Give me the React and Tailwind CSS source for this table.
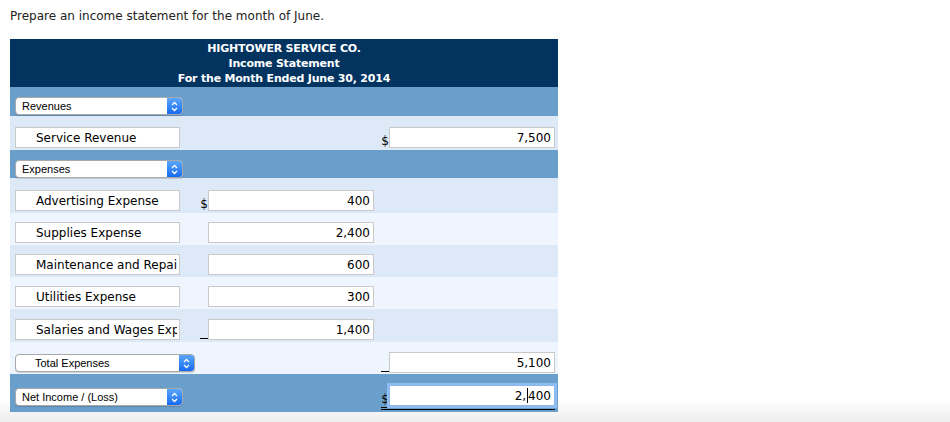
import React from 'react';

const verdana = { fontFamily: '"DejaVu Sans", Verdana, sans-serif' };

// mac style select box
function Select({ label, width = 'w-[168px]', indent = 'pl-[6px]' }) {
  return (
    <div className={`${width} h-[18px] flex rounded-[4px] border border-[#a9a9a9] bg-white shadow-[0_1px_1px_rgba(0,0,0,0.15)] overflow-hidden`}>
      <div className={`flex-1 ${indent} text-[11px] leading-[16px] text-black font-['Liberation_Sans',Arial,sans-serif] truncate`}>
        {label}
      </div>
      <div className="w-[15px] h-full bg-gradient-to-b from-[#5aa6fb] to-[#1569ef] flex items-center justify-center">
        <svg width="7" height="11" viewBox="0 0 7 11" fill="none" stroke="white" strokeWidth="1.3">
          <path d="M1 4 L3.5 1.5 L6 4" />
          <path d="M1 7 L3.5 9.5 L6 7" />
        </svg>
      </div>
    </div>
  );
}

function LabelBox({ text }) {
  return (
    <input
      readOnly
      value={text}
      style={verdana}
      className="w-[165px] h-[21px] border border-[#c9c9c9] bg-white pl-[20px] pr-[2px] text-[12px] text-black outline-none"
    />
  );
}

function Amount({ value, mark = '' }) {
  return (
    <div className="flex items-end">
      <span style={verdana} className={`text-[12px] leading-[14px] text-black w-[8px] text-center ${mark === '_' ? 'border-b border-black h-[1px] mb-[1px]' : ''}`}>
        {mark === '$' ? '$' : ''}
      </span>
      <input
        readOnly
        value={value}
        style={verdana}
        className="w-[166px] h-[21px] border border-[#c9c9c9] bg-white px-[3px] text-right text-[12px] text-black outline-none"
      />
    </div>
  );
}

function Row({ bg, h, children, align = 'items-end', pb = 'pb-[3px]' }) {
  return (
    <div className={`${bg} ${h} ${pb} flex ${align}`}>
      {children}
    </div>
  );
}

export default function App() {
  const light = 'bg-[#dee9f8]';
  const lighter = 'bg-[#eef5fe]';
  const mid = 'bg-[#6a9fcc]';

  const expenses = [
    { name: 'Advertising Expense', amount: '400', mark: '$', bg: light, h: 'h-[35px]' },
    { name: 'Supplies Expense', amount: '2,400', mark: '', bg: lighter, h: 'h-[32px]' },
    { name: 'Maintenance and Repairs Expense', amount: '600', mark: '', bg: light, h: 'h-[32px]' },
    { name: 'Utilities Expense', amount: '300', mark: '', bg: lighter, h: 'h-[32px]' },
    { name: 'Salaries and Wages Expense', amount: '1,400', mark: '_', bg: light, h: 'h-[33px]' },
  ];

  return (
    <div className="w-[950px] h-[422px] bg-[linear-gradient(to_bottom,#ffffff_0px,#ffffff_400px,#ededed_422px)]">
      <p style={verdana} className="pl-[10px] pt-[8px] text-[12px] leading-[16px] text-[#222]">
        Prepare an income statement for the month of June.
      </p>

      <div className="ml-[10px] mt-[15px] w-[548px]">
        {/* header */}
        <div style={verdana} className="h-[48px] bg-[#03335f] pt-[2px] text-center text-white font-bold text-[11px] leading-[15px] tracking-[-0.2px]">
          <div>HIGHTOWER SERVICE CO.</div>
          <div>Income Statement</div>
          <div>For the Month Ended June 30, 2014</div>
        </div>

        {/* revenues */}
        <Row bg={mid} h="h-[29px]" pb="pb-[1px]">
          <div className="pl-[5px]"><Select label="Revenues" /></div>
        </Row>
        <Row bg={light} h="h-[34px]" pb="pb-[2px]">
          <div className="w-[185px] pl-[5px]"><LabelBox text="Service Revenue" /></div>
          <div className="w-[181px]" />
          <div className="w-[182px] flex justify-end pr-[3px]"><Amount value="7,500" mark="$" /></div>
        </Row>

        {/* expenses */}
        <Row bg={mid} h="h-[28px]" pb="pb-[0px]">
          <div className="pl-[5px]"><Select label="Expenses" /></div>
        </Row>
        {expenses.map((e) => (
          <Row key={e.name} bg={e.bg} h={e.h} pb="pb-[2px]">
            <div className="w-[185px] pl-[5px]"><LabelBox text={e.name} /></div>
            <div className="w-[181px] flex justify-end pr-[2px]"><Amount value={e.amount} mark={e.mark} /></div>
          </Row>
        ))}

        {/* total */}
        <Row bg={lighter} h="h-[32px]" pb="pb-[1px]">
          <div className="w-[366px] pl-[5px] pb-[1px]"><Select label="Total Expenses" width="w-[180px]" indent="pl-[19px]" /></div>
          <div className="w-[182px] flex justify-end pr-[3px]"><Amount value="5,100" mark="_" /></div>
        </Row>

        {/* net income */}
        <Row bg={mid} h="h-[38px]" pb="pb-[2px]">
          <div className="w-[366px] pl-[5px] pb-[4px]"><Select label="Net Income / (Loss)" /></div>
          <div className="w-[182px] flex justify-end pr-[3px]">
            <div className="border-b-[3px] border-double border-black pb-[1px] flex items-end">
              <span style={verdana} className="w-[8px] text-[12px] leading-[14px] text-black text-center">$</span>
              <div style={verdana} className="w-[166px] h-[21px] border border-[#8ab8ee] ring-2 ring-[#8fbcf2] bg-white px-[3px] flex items-center justify-end text-[12px] text-black">
                2,<span className="inline-block w-[1px] h-[15px] bg-black mx-[0.5px]" />400
              </div>
            </div>
          </div>
        </Row>
      </div>
    </div>
  );
}
